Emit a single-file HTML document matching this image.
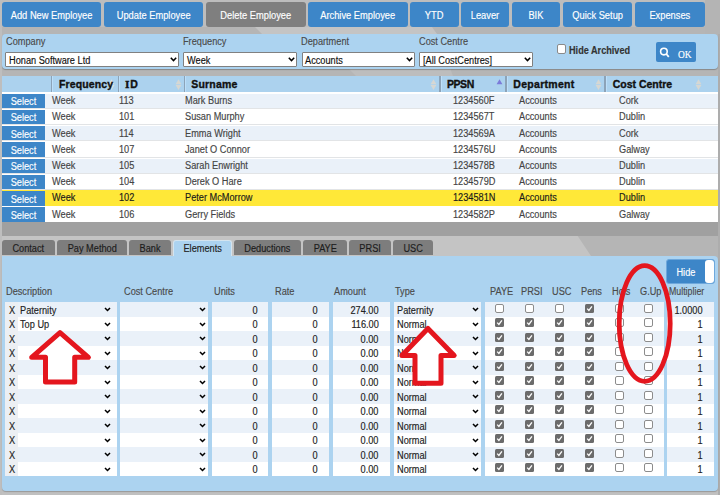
<!DOCTYPE html>
<html><head><meta charset="utf-8"><style>
html,body{margin:0;padding:0;width:720px;height:495px;overflow:hidden;background:#c0c0c0}
body{position:relative;font-family:"Liberation Sans",sans-serif}
.r{position:absolute}
svg{display:block}
.t{position:absolute;line-height:1;white-space:pre;font-family:"Liberation Sans",sans-serif}
</style></head><body>
<svg class="r" style="left:0;top:0" width="720" height="495" viewBox="0 0 720 495"><rect width="720" height="495" fill="#b5b5b5"/><polygon points="255,27 432,27 437,34 262,34" fill="#c4c4c4"/><polygon points="348,68 450,68 453,76 356,76" fill="#bdbdbd"/><polygon points="0,235 577,235 591,256 0,256" fill="#c4c4c4"/><rect x="0" y="0" width="720" height="27" fill="#bdbdbd"/><rect x="0" y="488" width="720" height="7" fill="#c0c0c0"/><rect x="0" y="0" width="2" height="495" fill="#bebebe"/><rect x="705" y="0" width="15" height="34" fill="#b4b4b4"/><rect x="718" y="34" width="2" height="461" fill="#adadad"/></svg>
<div class="r" style="left:2.00px;top:2.30px;width:99.20px;height:24.40px;background:#3d86c8;border-radius:3px"></div>
<div class="t" style="left:2.00px;width:99.20px;top:10.54px;text-align:center;font-size:10px;color:#fff;font-weight:normal;transform:scaleX(0.93);transform-origin:center;-webkit-text-stroke:0.15px #fff;">Add New Employee</div>
<div class="r" style="left:104.00px;top:2.30px;width:99.30px;height:24.40px;background:#3d86c8;border-radius:3px"></div>
<div class="t" style="left:104.00px;width:99.30px;top:10.54px;text-align:center;font-size:10px;color:#fff;font-weight:normal;transform:scaleX(0.93);transform-origin:center;-webkit-text-stroke:0.15px #fff;">Update Employee</div>
<div class="r" style="left:206.00px;top:2.30px;width:99.50px;height:24.40px;background:#7f7f7f;border-radius:3px"></div>
<div class="t" style="left:206.00px;width:99.50px;top:10.54px;text-align:center;font-size:10px;color:#fff;font-weight:normal;transform:scaleX(0.93);transform-origin:center;-webkit-text-stroke:0.15px #fff;">Delete Employee</div>
<div class="r" style="left:308.40px;top:2.30px;width:99.40px;height:24.40px;background:#3d86c8;border-radius:3px"></div>
<div class="t" style="left:308.40px;width:99.40px;top:10.54px;text-align:center;font-size:10px;color:#fff;font-weight:normal;transform:scaleX(0.93);transform-origin:center;-webkit-text-stroke:0.15px #fff;">Archive Employee</div>
<div class="r" style="left:410.40px;top:2.30px;width:48.30px;height:24.40px;background:#3d86c8;border-radius:3px"></div>
<div class="t" style="left:410.40px;width:48.30px;top:10.54px;text-align:center;font-size:10px;color:#fff;font-weight:normal;transform:scaleX(0.93);transform-origin:center;-webkit-text-stroke:0.15px #fff;">YTD</div>
<div class="r" style="left:460.90px;top:2.30px;width:48.00px;height:24.40px;background:#3d86c8;border-radius:3px"></div>
<div class="t" style="left:460.90px;width:48.00px;top:10.54px;text-align:center;font-size:10px;color:#fff;font-weight:normal;transform:scaleX(0.93);transform-origin:center;-webkit-text-stroke:0.15px #fff;">Leaver</div>
<div class="r" style="left:512.20px;top:2.30px;width:47.80px;height:24.40px;background:#3d86c8;border-radius:3px"></div>
<div class="t" style="left:512.20px;width:47.80px;top:10.54px;text-align:center;font-size:10px;color:#fff;font-weight:normal;transform:scaleX(0.93);transform-origin:center;-webkit-text-stroke:0.15px #fff;">BIK</div>
<div class="r" style="left:563.00px;top:2.30px;width:69.30px;height:24.40px;background:#3d86c8;border-radius:3px"></div>
<div class="t" style="left:563.00px;width:69.30px;top:10.54px;text-align:center;font-size:10px;color:#fff;font-weight:normal;transform:scaleX(0.93);transform-origin:center;-webkit-text-stroke:0.15px #fff;">Quick Setup</div>
<div class="r" style="left:635.20px;top:2.30px;width:69.70px;height:24.40px;background:#3d86c8;border-radius:3px"></div>
<div class="t" style="left:635.20px;width:69.70px;top:10.54px;text-align:center;font-size:10px;color:#fff;font-weight:normal;transform:scaleX(0.93);transform-origin:center;-webkit-text-stroke:0.15px #fff;">Expenses</div>
<div class="r" style="left:2.00px;top:34.00px;width:716.00px;height:34.60px;background:#acd3f0;border-radius:4px;box-shadow:0 1px 1px rgba(0,0,0,0.25)"></div>
<div class="t" style="left:5.80px;top:37.34px;font-size:10px;color:#4a4a4a;font-weight:normal;transform:scaleX(0.92);transform-origin:left;-webkit-text-stroke:0.15px #4a4a4a;">Company</div>
<div class="t" style="left:182.80px;top:37.34px;font-size:10px;color:#4a4a4a;font-weight:normal;transform:scaleX(0.92);transform-origin:left;-webkit-text-stroke:0.15px #4a4a4a;">Frequency</div>
<div class="t" style="left:301.00px;top:37.34px;font-size:10px;color:#4a4a4a;font-weight:normal;transform:scaleX(0.92);transform-origin:left;-webkit-text-stroke:0.15px #4a4a4a;">Department</div>
<div class="t" style="left:419.00px;top:37.34px;font-size:10px;color:#4a4a4a;font-weight:normal;transform:scaleX(0.92);transform-origin:left;-webkit-text-stroke:0.15px #4a4a4a;">Cost Centre</div>
<div class="r" style="left:5.30px;top:52.20px;width:174.10px;height:14.60px;background:#fff;border:1px solid #808080;box-sizing:border-box;border-radius:1px"></div>
<div class="t" style="left:8.90px;top:55.73px;font-size:10px;color:#111;font-weight:normal;transform:scaleX(0.92);transform-origin:left;-webkit-text-stroke:0.15px #111;">Honan Software Ltd</div>
<div class="r" style="left:170.40px;top:57.4px;width:7px;height:5px"><svg width="7" height="5" viewBox="0 0 7 5"><path d="M0.8 0.8 L3.5 3.6 L6.2 0.8" fill="none" stroke="#000" stroke-width="1.5"/></svg></div>
<div class="r" style="left:183.30px;top:52.20px;width:113.90px;height:14.60px;background:#fff;border:1px solid #808080;box-sizing:border-box;border-radius:1px"></div>
<div class="t" style="left:186.90px;top:55.73px;font-size:10px;color:#111;font-weight:normal;transform:scaleX(0.92);transform-origin:left;-webkit-text-stroke:0.15px #111;">Week</div>
<div class="r" style="left:288.20px;top:57.4px;width:7px;height:5px"><svg width="7" height="5" viewBox="0 0 7 5"><path d="M0.8 0.8 L3.5 3.6 L6.2 0.8" fill="none" stroke="#000" stroke-width="1.5"/></svg></div>
<div class="r" style="left:301.70px;top:52.20px;width:113.50px;height:14.60px;background:#fff;border:1px solid #808080;box-sizing:border-box;border-radius:1px"></div>
<div class="t" style="left:305.30px;top:55.73px;font-size:10px;color:#111;font-weight:normal;transform:scaleX(0.92);transform-origin:left;-webkit-text-stroke:0.15px #111;">Accounts</div>
<div class="r" style="left:406.20px;top:57.4px;width:7px;height:5px"><svg width="7" height="5" viewBox="0 0 7 5"><path d="M0.8 0.8 L3.5 3.6 L6.2 0.8" fill="none" stroke="#000" stroke-width="1.5"/></svg></div>
<div class="r" style="left:419.40px;top:52.20px;width:113.90px;height:14.60px;background:#fff;border:1px solid #808080;box-sizing:border-box;border-radius:1px"></div>
<div class="t" style="left:423.00px;top:55.73px;font-size:10px;color:#111;font-weight:normal;transform:scaleX(0.92);transform-origin:left;-webkit-text-stroke:0.15px #111;">[All CostCentres]</div>
<div class="r" style="left:524.30px;top:57.4px;width:7px;height:5px"><svg width="7" height="5" viewBox="0 0 7 5"><path d="M0.8 0.8 L3.5 3.6 L6.2 0.8" fill="none" stroke="#000" stroke-width="1.5"/></svg></div>
<div class="r" style="left:557.10px;top:44.00px;width:8.70px;height:9.70px;background:#fff;border:1px solid #8a8a8a;box-sizing:border-box;border-radius:2px"></div>
<div class="t" style="left:568.90px;top:46.34px;font-size:10px;color:#333;font-weight:bold;transform:scaleX(0.914);transform-origin:left;-webkit-text-stroke:0.15px #333;">Hide Archived</div>
<div class="r" style="left:655.90px;top:42.00px;width:39.70px;height:20.00px;background:#3d86c8;border-radius:2px"></div>
<svg class="r" style="left:656px;top:42px" width="40" height="20" viewBox="0 0 40 20"><circle cx="7.9" cy="9.6" r="3.3" fill="none" stroke="#fff" stroke-width="1.6"/><line x1="10.3" y1="12" x2="12.8" y2="14.8" stroke="#fff" stroke-width="1.8"/></svg>
<div class="t" style="left:678.00px;top:49.02px;font-size:11.2px;color:#fff;font-weight:normal;transform:scaleX(0.84);transform-origin:left;-webkit-text-stroke:0.15px #fff;font-family:'Liberation Serif',serif">OK</div>
<div class="r" style="left:2.00px;top:75.60px;width:716.00px;height:146.40px;background:#fff"></div>
<div class="r" style="left:2.00px;top:75.60px;width:716.00px;height:16.20px;background:#acd2ee"></div>
<div class="r" style="left:50.70px;top:75.80px;width:1.50px;height:15.80px;background:#8ca3b8"></div>
<div class="r" style="left:52.20px;top:75.80px;width:1.00px;height:15.80px;background:#bddff9"></div>
<div class="r" style="left:117.50px;top:75.80px;width:1.50px;height:15.80px;background:#8ca3b8"></div>
<div class="r" style="left:119.00px;top:75.80px;width:1.00px;height:15.80px;background:#bddff9"></div>
<div class="r" style="left:183.50px;top:75.80px;width:1.50px;height:15.80px;background:#8ca3b8"></div>
<div class="r" style="left:185.00px;top:75.80px;width:1.00px;height:15.80px;background:#bddff9"></div>
<div class="r" style="left:439.00px;top:75.80px;width:1.50px;height:15.80px;background:#8ca3b8"></div>
<div class="r" style="left:440.50px;top:75.80px;width:1.00px;height:15.80px;background:#bddff9"></div>
<div class="r" style="left:505.30px;top:75.80px;width:1.50px;height:15.80px;background:#8ca3b8"></div>
<div class="r" style="left:506.80px;top:75.80px;width:1.00px;height:15.80px;background:#bddff9"></div>
<div class="r" style="left:604.40px;top:75.80px;width:1.50px;height:15.80px;background:#8ca3b8"></div>
<div class="r" style="left:605.90px;top:75.80px;width:1.00px;height:15.80px;background:#bddff9"></div>
<svg class="r" style="left:108.10px;top:78.8px" width="7" height="11" viewBox="0 0 7 11"><path d="M0.6 5.3 L3.5 0.3 L6.4 5.3Z" fill="#dfe3e0"/><path d="M0.6 5.9 L3.5 10.9 L6.4 5.9Z" fill="#dfe3e0"/></svg>
<svg class="r" style="left:174.50px;top:78.8px" width="7" height="11" viewBox="0 0 7 11"><path d="M0.6 5.3 L3.5 0.3 L6.4 5.3Z" fill="#d6d7d3"/><path d="M0.6 5.9 L3.5 10.9 L6.4 5.9Z" fill="#d6d7d3"/></svg>
<svg class="r" style="left:429.80px;top:78.8px" width="7" height="11" viewBox="0 0 7 11"><path d="M0.6 5.3 L3.5 0.3 L6.4 5.3Z" fill="#d6d7d3"/><path d="M0.6 5.9 L3.5 10.9 L6.4 5.9Z" fill="#d6d7d3"/></svg>
<svg class="r" style="left:594.50px;top:78.8px" width="7" height="11" viewBox="0 0 7 11"><path d="M0.6 5.3 L3.5 0.3 L6.4 5.3Z" fill="#d6d7d3"/><path d="M0.6 5.9 L3.5 10.9 L6.4 5.9Z" fill="#d6d7d3"/></svg>
<svg class="r" style="left:694.50px;top:78.8px" width="7" height="11" viewBox="0 0 7 11"><path d="M0.6 5.3 L3.5 0.3 L6.4 5.3Z" fill="#d6d7d3"/><path d="M0.6 5.9 L3.5 10.9 L6.4 5.9Z" fill="#d6d7d3"/></svg>
<svg class="r" style="left:496.00px;top:78.8px" width="7" height="11" viewBox="0 0 7 11"><path d="M0.6 5.3 L3.5 0.3 L6.4 5.3Z" fill="#7b7bd9"/><path d="M0.6 5.9 L3.5 10.9 L6.4 5.9Z" fill="none"/></svg>
<div class="t" style="left:59.10px;top:79.31px;font-size:10.5px;color:#111;font-weight:bold;transform:scaleX(1);transform-origin:left;-webkit-text-stroke:0.15px #111;letter-spacing:0.1px;-webkit-text-stroke:0.35px #111">Frequency</div>
<div class="t" style="left:125.00px;top:79.31px;font-size:10.5px;color:#111;font-weight:bold;transform:scaleX(1);transform-origin:left;-webkit-text-stroke:0.15px #111;letter-spacing:0.8px;-webkit-text-stroke:0.35px #111"><span style='font-family:Liberation Serif,serif;font-size:11.4px'>I</span>D</div>
<div class="t" style="left:191.30px;top:79.31px;font-size:10.5px;color:#111;font-weight:bold;transform:scaleX(1);transform-origin:left;-webkit-text-stroke:0.15px #111;letter-spacing:0.18px;-webkit-text-stroke:0.35px #111">Surname</div>
<div class="t" style="left:447.00px;top:79.31px;font-size:10.5px;color:#111;font-weight:bold;transform:scaleX(1);transform-origin:left;-webkit-text-stroke:0.15px #111;letter-spacing:-0.45px;-webkit-text-stroke:0.35px #111">PPSN</div>
<div class="t" style="left:513.30px;top:79.31px;font-size:10.5px;color:#111;font-weight:bold;transform:scaleX(1);transform-origin:left;-webkit-text-stroke:0.15px #111;letter-spacing:0.29px;-webkit-text-stroke:0.35px #111">Department</div>
<div class="t" style="left:612.70px;top:79.31px;font-size:10.5px;color:#111;font-weight:bold;transform:scaleX(1);transform-origin:left;-webkit-text-stroke:0.15px #111;letter-spacing:0px;-webkit-text-stroke:0.35px #111">Cost Centre</div>
<div class="r" style="left:45.00px;top:93.50px;width:673.00px;height:14.30px;background:#eaf1f9"></div>
<div class="r" style="left:2.00px;top:107.90px;width:716.00px;height:0.90px;background:#e2e4e6"></div>
<div class="r" style="left:2.00px;top:93.50px;width:43.00px;height:14.30px;background:#3d86c8"></div>
<div class="t" style="left:2.00px;width:43.00px;top:97.03px;text-align:center;font-size:10px;color:#fff;font-weight:normal;transform:scaleX(0.92);transform-origin:center;-webkit-text-stroke:0.15px #fff;">Select</div>
<div class="t" style="left:51.70px;top:96.44px;font-size:10px;color:#444;font-weight:normal;transform:scaleX(0.92);transform-origin:left;-webkit-text-stroke:0.15px #444;">Week</div>
<div class="t" style="left:118.75px;top:96.44px;font-size:10px;color:#444;font-weight:normal;transform:scaleX(0.92);transform-origin:left;-webkit-text-stroke:0.15px #444;">113</div>
<div class="t" style="left:184.70px;top:96.44px;font-size:10px;color:#444;font-weight:normal;transform:scaleX(0.92);transform-origin:left;-webkit-text-stroke:0.15px #444;">Mark Burns</div>
<div class="t" style="left:453.30px;top:96.44px;font-size:10px;color:#444;font-weight:normal;transform:scaleX(0.92);transform-origin:left;-webkit-text-stroke:0.15px #444;">1234560F</div>
<div class="t" style="left:519.20px;top:96.44px;font-size:10px;color:#444;font-weight:normal;transform:scaleX(0.92);transform-origin:left;-webkit-text-stroke:0.15px #444;">Accounts</div>
<div class="t" style="left:618.50px;top:96.44px;font-size:10px;color:#444;font-weight:normal;transform:scaleX(0.92);transform-origin:left;-webkit-text-stroke:0.15px #444;">Cork</div>
<div class="r" style="left:2.00px;top:124.16px;width:716.00px;height:0.90px;background:#e2e4e6"></div>
<div class="r" style="left:2.00px;top:109.76px;width:43.00px;height:14.30px;background:#3d86c8"></div>
<div class="t" style="left:2.00px;width:43.00px;top:113.30px;text-align:center;font-size:10px;color:#fff;font-weight:normal;transform:scaleX(0.92);transform-origin:center;-webkit-text-stroke:0.15px #fff;">Select</div>
<div class="t" style="left:51.70px;top:111.90px;font-size:10px;color:#444;font-weight:normal;transform:scaleX(0.92);transform-origin:left;-webkit-text-stroke:0.15px #444;">Week</div>
<div class="t" style="left:118.75px;top:111.90px;font-size:10px;color:#444;font-weight:normal;transform:scaleX(0.92);transform-origin:left;-webkit-text-stroke:0.15px #444;">101</div>
<div class="t" style="left:184.70px;top:111.90px;font-size:10px;color:#444;font-weight:normal;transform:scaleX(0.92);transform-origin:left;-webkit-text-stroke:0.15px #444;">Susan Murphy</div>
<div class="t" style="left:453.30px;top:111.90px;font-size:10px;color:#444;font-weight:normal;transform:scaleX(0.92);transform-origin:left;-webkit-text-stroke:0.15px #444;">1234567T</div>
<div class="t" style="left:519.20px;top:111.90px;font-size:10px;color:#444;font-weight:normal;transform:scaleX(0.92);transform-origin:left;-webkit-text-stroke:0.15px #444;">Accounts</div>
<div class="t" style="left:618.50px;top:111.90px;font-size:10px;color:#444;font-weight:normal;transform:scaleX(0.92);transform-origin:left;-webkit-text-stroke:0.15px #444;">Dublin</div>
<div class="r" style="left:45.00px;top:126.02px;width:673.00px;height:14.30px;background:#eaf1f9"></div>
<div class="r" style="left:2.00px;top:140.42px;width:716.00px;height:0.90px;background:#e2e4e6"></div>
<div class="r" style="left:2.00px;top:126.02px;width:43.00px;height:14.30px;background:#3d86c8"></div>
<div class="t" style="left:2.00px;width:43.00px;top:129.56px;text-align:center;font-size:10px;color:#fff;font-weight:normal;transform:scaleX(0.92);transform-origin:center;-webkit-text-stroke:0.15px #fff;">Select</div>
<div class="t" style="left:51.70px;top:128.95px;font-size:10px;color:#444;font-weight:normal;transform:scaleX(0.92);transform-origin:left;-webkit-text-stroke:0.15px #444;">Week</div>
<div class="t" style="left:118.75px;top:128.95px;font-size:10px;color:#444;font-weight:normal;transform:scaleX(0.92);transform-origin:left;-webkit-text-stroke:0.15px #444;">114</div>
<div class="t" style="left:184.70px;top:128.95px;font-size:10px;color:#444;font-weight:normal;transform:scaleX(0.92);transform-origin:left;-webkit-text-stroke:0.15px #444;">Emma Wright</div>
<div class="t" style="left:453.30px;top:128.95px;font-size:10px;color:#444;font-weight:normal;transform:scaleX(0.92);transform-origin:left;-webkit-text-stroke:0.15px #444;">1234569A</div>
<div class="t" style="left:519.20px;top:128.95px;font-size:10px;color:#444;font-weight:normal;transform:scaleX(0.92);transform-origin:left;-webkit-text-stroke:0.15px #444;">Accounts</div>
<div class="t" style="left:618.50px;top:128.95px;font-size:10px;color:#444;font-weight:normal;transform:scaleX(0.92);transform-origin:left;-webkit-text-stroke:0.15px #444;">Cork</div>
<div class="r" style="left:2.00px;top:156.68px;width:716.00px;height:0.90px;background:#e2e4e6"></div>
<div class="r" style="left:2.00px;top:142.28px;width:43.00px;height:14.30px;background:#3d86c8"></div>
<div class="t" style="left:2.00px;width:43.00px;top:145.81px;text-align:center;font-size:10px;color:#fff;font-weight:normal;transform:scaleX(0.92);transform-origin:center;-webkit-text-stroke:0.15px #fff;">Select</div>
<div class="t" style="left:51.70px;top:145.21px;font-size:10px;color:#444;font-weight:normal;transform:scaleX(0.92);transform-origin:left;-webkit-text-stroke:0.15px #444;">Week</div>
<div class="t" style="left:118.75px;top:145.21px;font-size:10px;color:#444;font-weight:normal;transform:scaleX(0.92);transform-origin:left;-webkit-text-stroke:0.15px #444;">107</div>
<div class="t" style="left:184.70px;top:145.21px;font-size:10px;color:#444;font-weight:normal;transform:scaleX(0.92);transform-origin:left;-webkit-text-stroke:0.15px #444;">Janet O Connor</div>
<div class="t" style="left:453.30px;top:145.21px;font-size:10px;color:#444;font-weight:normal;transform:scaleX(0.92);transform-origin:left;-webkit-text-stroke:0.15px #444;">1234576U</div>
<div class="t" style="left:519.20px;top:145.21px;font-size:10px;color:#444;font-weight:normal;transform:scaleX(0.92);transform-origin:left;-webkit-text-stroke:0.15px #444;">Accounts</div>
<div class="t" style="left:618.50px;top:145.21px;font-size:10px;color:#444;font-weight:normal;transform:scaleX(0.92);transform-origin:left;-webkit-text-stroke:0.15px #444;">Galway</div>
<div class="r" style="left:45.00px;top:158.54px;width:673.00px;height:14.30px;background:#eaf1f9"></div>
<div class="r" style="left:2.00px;top:172.94px;width:716.00px;height:0.90px;background:#e2e4e6"></div>
<div class="r" style="left:2.00px;top:158.54px;width:43.00px;height:14.30px;background:#3d86c8"></div>
<div class="t" style="left:2.00px;width:43.00px;top:162.08px;text-align:center;font-size:10px;color:#fff;font-weight:normal;transform:scaleX(0.92);transform-origin:center;-webkit-text-stroke:0.15px #fff;">Select</div>
<div class="t" style="left:51.70px;top:161.47px;font-size:10px;color:#444;font-weight:normal;transform:scaleX(0.92);transform-origin:left;-webkit-text-stroke:0.15px #444;">Week</div>
<div class="t" style="left:118.75px;top:161.47px;font-size:10px;color:#444;font-weight:normal;transform:scaleX(0.92);transform-origin:left;-webkit-text-stroke:0.15px #444;">105</div>
<div class="t" style="left:184.70px;top:161.47px;font-size:10px;color:#444;font-weight:normal;transform:scaleX(0.92);transform-origin:left;-webkit-text-stroke:0.15px #444;">Sarah Enwright</div>
<div class="t" style="left:453.30px;top:161.47px;font-size:10px;color:#444;font-weight:normal;transform:scaleX(0.92);transform-origin:left;-webkit-text-stroke:0.15px #444;">1234578B</div>
<div class="t" style="left:519.20px;top:161.47px;font-size:10px;color:#444;font-weight:normal;transform:scaleX(0.92);transform-origin:left;-webkit-text-stroke:0.15px #444;">Accounts</div>
<div class="t" style="left:618.50px;top:161.47px;font-size:10px;color:#444;font-weight:normal;transform:scaleX(0.92);transform-origin:left;-webkit-text-stroke:0.15px #444;">Dublin</div>
<div class="r" style="left:2.00px;top:189.20px;width:716.00px;height:0.90px;background:#e2e4e6"></div>
<div class="r" style="left:2.00px;top:174.80px;width:43.00px;height:14.30px;background:#3d86c8"></div>
<div class="t" style="left:2.00px;width:43.00px;top:178.34px;text-align:center;font-size:10px;color:#fff;font-weight:normal;transform:scaleX(0.92);transform-origin:center;-webkit-text-stroke:0.15px #fff;">Select</div>
<div class="t" style="left:51.70px;top:176.93px;font-size:10px;color:#444;font-weight:normal;transform:scaleX(0.92);transform-origin:left;-webkit-text-stroke:0.15px #444;">Week</div>
<div class="t" style="left:118.75px;top:176.93px;font-size:10px;color:#444;font-weight:normal;transform:scaleX(0.92);transform-origin:left;-webkit-text-stroke:0.15px #444;">104</div>
<div class="t" style="left:184.70px;top:176.93px;font-size:10px;color:#444;font-weight:normal;transform:scaleX(0.92);transform-origin:left;-webkit-text-stroke:0.15px #444;">Derek O Hare</div>
<div class="t" style="left:453.30px;top:176.93px;font-size:10px;color:#444;font-weight:normal;transform:scaleX(0.92);transform-origin:left;-webkit-text-stroke:0.15px #444;">1234579D</div>
<div class="t" style="left:519.20px;top:176.93px;font-size:10px;color:#444;font-weight:normal;transform:scaleX(0.92);transform-origin:left;-webkit-text-stroke:0.15px #444;">Accounts</div>
<div class="t" style="left:618.50px;top:176.93px;font-size:10px;color:#444;font-weight:normal;transform:scaleX(0.92);transform-origin:left;-webkit-text-stroke:0.15px #444;">Dublin</div>
<div class="r" style="left:45.00px;top:190.00px;width:673.00px;height:15.70px;background:#ffe838"></div>
<div class="r" style="left:2.00px;top:190.00px;width:43.00px;height:1.40px;background:#ffe838"></div>
<div class="r" style="left:2.00px;top:191.40px;width:43.00px;height:14.20px;background:#3d86c8"></div>
<div class="t" style="left:2.00px;width:43.00px;top:194.59px;text-align:center;font-size:10px;color:#fff;font-weight:normal;transform:scaleX(0.92);transform-origin:center;-webkit-text-stroke:0.15px #fff;">Select</div>
<div class="t" style="left:51.70px;top:193.19px;font-size:10px;color:#1a1a1a;font-weight:normal;transform:scaleX(0.92);transform-origin:left;-webkit-text-stroke:0.15px #1a1a1a;">Week</div>
<div class="t" style="left:118.75px;top:193.19px;font-size:10px;color:#1a1a1a;font-weight:normal;transform:scaleX(0.92);transform-origin:left;-webkit-text-stroke:0.15px #1a1a1a;">102</div>
<div class="t" style="left:184.70px;top:193.19px;font-size:10px;color:#1a1a1a;font-weight:normal;transform:scaleX(0.92);transform-origin:left;-webkit-text-stroke:0.15px #1a1a1a;">Peter McMorrow</div>
<div class="t" style="left:453.30px;top:193.19px;font-size:10px;color:#1a1a1a;font-weight:normal;transform:scaleX(0.92);transform-origin:left;-webkit-text-stroke:0.15px #1a1a1a;">1234581N</div>
<div class="t" style="left:519.20px;top:193.19px;font-size:10px;color:#1a1a1a;font-weight:normal;transform:scaleX(0.92);transform-origin:left;-webkit-text-stroke:0.15px #1a1a1a;">Accounts</div>
<div class="t" style="left:618.50px;top:193.19px;font-size:10px;color:#1a1a1a;font-weight:normal;transform:scaleX(0.92);transform-origin:left;-webkit-text-stroke:0.15px #1a1a1a;">Dublin</div>
<div class="r" style="left:2.00px;top:207.32px;width:43.00px;height:14.30px;background:#3d86c8"></div>
<div class="t" style="left:2.00px;width:43.00px;top:210.85px;text-align:center;font-size:10px;color:#fff;font-weight:normal;transform:scaleX(0.92);transform-origin:center;-webkit-text-stroke:0.15px #fff;">Select</div>
<div class="t" style="left:51.70px;top:210.25px;font-size:10px;color:#444;font-weight:normal;transform:scaleX(0.92);transform-origin:left;-webkit-text-stroke:0.15px #444;">Week</div>
<div class="t" style="left:118.75px;top:210.25px;font-size:10px;color:#444;font-weight:normal;transform:scaleX(0.92);transform-origin:left;-webkit-text-stroke:0.15px #444;">106</div>
<div class="t" style="left:184.70px;top:210.25px;font-size:10px;color:#444;font-weight:normal;transform:scaleX(0.92);transform-origin:left;-webkit-text-stroke:0.15px #444;">Gerry Fields</div>
<div class="t" style="left:453.30px;top:210.25px;font-size:10px;color:#444;font-weight:normal;transform:scaleX(0.92);transform-origin:left;-webkit-text-stroke:0.15px #444;">1234582P</div>
<div class="t" style="left:519.20px;top:210.25px;font-size:10px;color:#444;font-weight:normal;transform:scaleX(0.92);transform-origin:left;-webkit-text-stroke:0.15px #444;">Accounts</div>
<div class="t" style="left:618.50px;top:210.25px;font-size:10px;color:#444;font-weight:normal;transform:scaleX(0.92);transform-origin:left;-webkit-text-stroke:0.15px #444;">Galway</div>
<div class="r" style="left:2.00px;top:222.00px;width:716.00px;height:13.80px;background:#a0a0a0"></div>
<div class="r" style="left:2.00px;top:239.90px;width:52.60px;height:15.60px;background:#7d7d7d;border-radius:3px 3px 0 0"></div>
<div class="t" style="left:2.00px;width:52.60px;top:243.93px;text-align:center;font-size:10px;color:#1c1c1c;font-weight:normal;transform:scaleX(0.92);transform-origin:center;-webkit-text-stroke:0.15px #1c1c1c;">Contact</div>
<div class="r" style="left:56.50px;top:239.90px;width:70.50px;height:15.60px;background:#7d7d7d;border-radius:3px 3px 0 0"></div>
<div class="t" style="left:56.50px;width:70.50px;top:243.93px;text-align:center;font-size:10px;color:#1c1c1c;font-weight:normal;transform:scaleX(0.92);transform-origin:center;-webkit-text-stroke:0.15px #1c1c1c;">Pay Method</div>
<div class="r" style="left:129.00px;top:239.90px;width:42.10px;height:15.60px;background:#7d7d7d;border-radius:3px 3px 0 0"></div>
<div class="t" style="left:129.00px;width:42.10px;top:243.93px;text-align:center;font-size:10px;color:#1c1c1c;font-weight:normal;transform:scaleX(0.92);transform-origin:center;-webkit-text-stroke:0.15px #1c1c1c;">Bank</div>
<div class="r" style="left:172.90px;top:239.90px;width:59.30px;height:17.10px;background:#acd3f0;border-radius:3px 3px 0 0;border:1px solid #d4e4ef;border-bottom:none;box-sizing:border-box"></div>
<div class="t" style="left:172.90px;width:59.30px;top:243.93px;text-align:center;font-size:10px;color:#222;font-weight:normal;transform:scaleX(0.92);transform-origin:center;-webkit-text-stroke:0.15px #222;">Elements</div>
<div class="r" style="left:234.00px;top:239.90px;width:66.70px;height:15.60px;background:#7d7d7d;border-radius:3px 3px 0 0"></div>
<div class="t" style="left:234.00px;width:66.70px;top:243.93px;text-align:center;font-size:10px;color:#1c1c1c;font-weight:normal;transform:scaleX(0.92);transform-origin:center;-webkit-text-stroke:0.15px #1c1c1c;">Deductions</div>
<div class="r" style="left:302.70px;top:239.90px;width:44.60px;height:15.60px;background:#7d7d7d;border-radius:3px 3px 0 0"></div>
<div class="t" style="left:302.70px;width:44.60px;top:243.93px;text-align:center;font-size:10px;color:#1c1c1c;font-weight:normal;transform:scaleX(0.92);transform-origin:center;-webkit-text-stroke:0.15px #1c1c1c;">PAYE</div>
<div class="r" style="left:348.90px;top:239.90px;width:42.20px;height:15.60px;background:#7d7d7d;border-radius:3px 3px 0 0"></div>
<div class="t" style="left:348.90px;width:42.20px;top:243.93px;text-align:center;font-size:10px;color:#1c1c1c;font-weight:normal;transform:scaleX(0.92);transform-origin:center;-webkit-text-stroke:0.15px #1c1c1c;">PRSI</div>
<div class="r" style="left:392.70px;top:239.90px;width:40.20px;height:15.60px;background:#7d7d7d;border-radius:3px 3px 0 0"></div>
<div class="t" style="left:392.70px;width:40.20px;top:243.93px;text-align:center;font-size:10px;color:#1c1c1c;font-weight:normal;transform:scaleX(0.92);transform-origin:center;-webkit-text-stroke:0.15px #1c1c1c;">USC</div>
<div class="r" style="left:2.00px;top:255.50px;width:716.00px;height:235.00px;background:#acd3f0;border-radius:0 4px 4px 4px;box-shadow:0 1px 1px rgba(0,0,0,0.2)"></div>
<div class="r" style="left:665.70px;top:259.20px;width:49.30px;height:25.00px;background:#3d86c8;border-radius:3px;border:1px solid #6ea8dc;box-sizing:border-box"></div>
<div class="r" style="left:705.40px;top:260.20px;width:8.80px;height:23.00px;background:#fff;border-radius:3px"></div>
<div class="t" style="left:665.70px;width:39.90px;top:268.04px;text-align:center;font-size:10px;color:#fff;font-weight:normal;transform:scaleX(0.92);transform-origin:center;-webkit-text-stroke:0.15px #fff;">Hide</div>
<div class="t" style="left:5.80px;top:287.24px;font-size:10px;color:#4a4a4a;font-weight:normal;transform:scaleX(0.92);transform-origin:left;-webkit-text-stroke:0.15px #4a4a4a;">Description</div>
<div class="t" style="left:123.50px;top:287.24px;font-size:10px;color:#4a4a4a;font-weight:normal;transform:scaleX(0.92);transform-origin:left;-webkit-text-stroke:0.15px #4a4a4a;">Cost Centre</div>
<div class="t" style="left:214.00px;top:287.24px;font-size:10px;color:#4a4a4a;font-weight:normal;transform:scaleX(0.92);transform-origin:left;-webkit-text-stroke:0.15px #4a4a4a;">Units</div>
<div class="t" style="left:274.50px;top:287.24px;font-size:10px;color:#4a4a4a;font-weight:normal;transform:scaleX(0.92);transform-origin:left;-webkit-text-stroke:0.15px #4a4a4a;">Rate</div>
<div class="t" style="left:334.20px;top:287.24px;font-size:10px;color:#4a4a4a;font-weight:normal;transform:scaleX(0.92);transform-origin:left;-webkit-text-stroke:0.15px #4a4a4a;">Amount</div>
<div class="t" style="left:395.00px;top:287.24px;font-size:10px;color:#4a4a4a;font-weight:normal;transform:scaleX(0.92);transform-origin:left;-webkit-text-stroke:0.15px #4a4a4a;">Type</div>
<div class="t" style="left:490.00px;top:287.24px;font-size:10px;color:#4a4a4a;font-weight:normal;transform:scaleX(0.92);transform-origin:left;-webkit-text-stroke:0.15px #4a4a4a;">PAYE</div>
<div class="t" style="left:520.80px;top:287.24px;font-size:10px;color:#4a4a4a;font-weight:normal;transform:scaleX(0.92);transform-origin:left;-webkit-text-stroke:0.15px #4a4a4a;">PRSI</div>
<div class="t" style="left:551.70px;top:287.24px;font-size:10px;color:#4a4a4a;font-weight:normal;transform:scaleX(0.92);transform-origin:left;-webkit-text-stroke:0.15px #4a4a4a;">USC</div>
<div class="t" style="left:580.50px;top:287.24px;font-size:10px;color:#4a4a4a;font-weight:normal;transform:scaleX(0.92);transform-origin:left;-webkit-text-stroke:0.15px #4a4a4a;">Pens</div>
<div class="t" style="left:611.70px;top:287.24px;font-size:10px;color:#4a4a4a;font-weight:normal;transform:scaleX(0.92);transform-origin:left;-webkit-text-stroke:0.15px #4a4a4a;">Hols</div>
<div class="t" style="left:640.00px;top:287.24px;font-size:10px;color:#4a4a4a;font-weight:normal;transform:scaleX(0.92);transform-origin:left;-webkit-text-stroke:0.15px #4a4a4a;">G.Up</div>
<div class="t" style="left:668.80px;top:287.24px;font-size:10px;color:#4a4a4a;font-weight:normal;transform:scaleX(0.88);transform-origin:left;-webkit-text-stroke:0.15px #4a4a4a;">Multiplier</div>
<div class="r" style="left:5.20px;top:302.20px;width:13.10px;height:174.00px;background:#eceff3"></div>
<div class="r" style="left:18.30px;top:302.20px;width:98.30px;height:14.50px;background:#eaf1f9"></div>
<div class="r" style="left:120.10px;top:302.20px;width:87.60px;height:14.50px;background:#eaf1f9"></div>
<div class="r" style="left:211.60px;top:302.20px;width:56.50px;height:14.50px;background:#eaf1f9"></div>
<div class="r" style="left:272.10px;top:302.20px;width:57.00px;height:14.50px;background:#eaf1f9"></div>
<div class="r" style="left:333.10px;top:302.20px;width:56.80px;height:14.50px;background:#eaf1f9"></div>
<div class="r" style="left:393.90px;top:302.20px;width:87.00px;height:14.50px;background:#eaf1f9"></div>
<div class="r" style="left:485.10px;top:302.20px;width:178.60px;height:14.50px;background:#eaf1f9"></div>
<div class="r" style="left:666.70px;top:302.20px;width:47.80px;height:14.50px;background:#eaf1f9"></div>
<div class="t" style="left:8.80px;top:305.94px;font-size:10px;color:#222;font-weight:normal;transform:scaleX(0.92);transform-origin:left;-webkit-text-stroke:0.15px #222;">X</div>
<div class="t" style="left:20.00px;top:305.94px;font-size:10px;color:#222;font-weight:normal;transform:scaleX(0.92);transform-origin:left;-webkit-text-stroke:0.15px #222;">Paternity</div>
<div class="r" style="left:104.2px;top:307.40px;width:7px;height:5px"><svg width="7" height="5" viewBox="0 0 7 5"><path d="M1.0 0.9 L3.5 3.5 L6.0 0.9" fill="none" stroke="#000" stroke-width="1.5"/></svg></div>
<div class="r" style="left:198.8px;top:307.40px;width:7px;height:5px"><svg width="7" height="5" viewBox="0 0 7 5"><path d="M1.0 0.9 L3.5 3.5 L6.0 0.9" fill="none" stroke="#000" stroke-width="1.5"/></svg></div>
<div class="r" style="left:472.3px;top:307.40px;width:7px;height:5px"><svg width="7" height="5" viewBox="0 0 7 5"><path d="M1.0 0.9 L3.5 3.5 L6.0 0.9" fill="none" stroke="#000" stroke-width="1.5"/></svg></div>
<div class="t" style="right:462.00px;top:305.94px;text-align:right;font-size:10px;color:#222;font-weight:normal;transform:scaleX(0.92);transform-origin:right;-webkit-text-stroke:0.15px #222;">0</div>
<div class="t" style="right:402.00px;top:305.94px;text-align:right;font-size:10px;color:#222;font-weight:normal;transform:scaleX(0.92);transform-origin:right;-webkit-text-stroke:0.15px #222;">0</div>
<div class="t" style="right:341.30px;top:305.94px;text-align:right;font-size:10px;color:#222;font-weight:normal;transform:scaleX(0.92);transform-origin:right;-webkit-text-stroke:0.15px #222;">274.00</div>
<div class="t" style="left:396.60px;top:305.94px;font-size:10px;color:#222;font-weight:normal;transform:scaleX(0.92);transform-origin:left;-webkit-text-stroke:0.15px #222;">Paternity</div>
<div class="t" style="right:17.30px;top:305.94px;text-align:right;font-size:10px;color:#222;font-weight:normal;transform:scaleX(0.92);transform-origin:right;-webkit-text-stroke:0.15px #222;">1.0000</div>
<svg class="r" style="left:495.20px;top:303.80px" width="9" height="9" viewBox="0 0 9 9"><rect x="0.5" y="0.5" width="8" height="8" rx="1.5" fill="#fff" stroke="#8c8c8c" stroke-width="1"/></svg>
<svg class="r" style="left:524.90px;top:303.80px" width="9" height="9" viewBox="0 0 9 9"><rect x="0.5" y="0.5" width="8" height="8" rx="1.5" fill="#fff" stroke="#8c8c8c" stroke-width="1"/></svg>
<svg class="r" style="left:554.90px;top:303.80px" width="9" height="9" viewBox="0 0 9 9"><rect x="0.5" y="0.5" width="8" height="8" rx="1.5" fill="#fff" stroke="#8c8c8c" stroke-width="1"/></svg>
<svg class="r" style="left:584.70px;top:303.80px" width="9" height="9" viewBox="0 0 9 9"><rect x="0" y="0" width="9" height="9" rx="1.5" fill="#6b6b6b"/><path d="M2.2 4.6 L3.9 6.5 L6.9 2.4" fill="none" stroke="#fff" stroke-width="1.3"/></svg>
<svg class="r" style="left:614.50px;top:303.80px" width="9" height="9" viewBox="0 0 9 9"><rect x="0.5" y="0.5" width="8" height="8" rx="1.5" fill="#fff" stroke="#8c8c8c" stroke-width="1"/></svg>
<svg class="r" style="left:644.00px;top:303.80px" width="9" height="9" viewBox="0 0 9 9"><rect x="0.5" y="0.5" width="8" height="8" rx="1.5" fill="#fff" stroke="#8c8c8c" stroke-width="1"/></svg>
<div class="r" style="left:18.30px;top:316.70px;width:98.30px;height:14.50px;background:#fff"></div>
<div class="r" style="left:120.10px;top:316.70px;width:87.60px;height:14.50px;background:#fff"></div>
<div class="r" style="left:211.60px;top:316.70px;width:56.50px;height:14.50px;background:#fff"></div>
<div class="r" style="left:272.10px;top:316.70px;width:57.00px;height:14.50px;background:#fff"></div>
<div class="r" style="left:333.10px;top:316.70px;width:56.80px;height:14.50px;background:#fff"></div>
<div class="r" style="left:393.90px;top:316.70px;width:87.00px;height:14.50px;background:#fff"></div>
<div class="r" style="left:485.10px;top:316.70px;width:178.60px;height:14.50px;background:#fff"></div>
<div class="r" style="left:666.70px;top:316.70px;width:47.80px;height:14.50px;background:#fff"></div>
<div class="t" style="left:8.80px;top:320.44px;font-size:10px;color:#222;font-weight:normal;transform:scaleX(0.92);transform-origin:left;-webkit-text-stroke:0.15px #222;">X</div>
<div class="t" style="left:20.00px;top:320.44px;font-size:10px;color:#222;font-weight:normal;transform:scaleX(0.92);transform-origin:left;-webkit-text-stroke:0.15px #222;">Top Up</div>
<div class="r" style="left:104.2px;top:321.90px;width:7px;height:5px"><svg width="7" height="5" viewBox="0 0 7 5"><path d="M1.0 0.9 L3.5 3.5 L6.0 0.9" fill="none" stroke="#000" stroke-width="1.5"/></svg></div>
<div class="r" style="left:198.8px;top:321.90px;width:7px;height:5px"><svg width="7" height="5" viewBox="0 0 7 5"><path d="M1.0 0.9 L3.5 3.5 L6.0 0.9" fill="none" stroke="#000" stroke-width="1.5"/></svg></div>
<div class="r" style="left:472.3px;top:321.90px;width:7px;height:5px"><svg width="7" height="5" viewBox="0 0 7 5"><path d="M1.0 0.9 L3.5 3.5 L6.0 0.9" fill="none" stroke="#000" stroke-width="1.5"/></svg></div>
<div class="t" style="right:462.00px;top:320.44px;text-align:right;font-size:10px;color:#222;font-weight:normal;transform:scaleX(0.92);transform-origin:right;-webkit-text-stroke:0.15px #222;">0</div>
<div class="t" style="right:402.00px;top:320.44px;text-align:right;font-size:10px;color:#222;font-weight:normal;transform:scaleX(0.92);transform-origin:right;-webkit-text-stroke:0.15px #222;">0</div>
<div class="t" style="right:341.30px;top:320.44px;text-align:right;font-size:10px;color:#222;font-weight:normal;transform:scaleX(0.92);transform-origin:right;-webkit-text-stroke:0.15px #222;">116.00</div>
<div class="t" style="left:396.60px;top:320.44px;font-size:10px;color:#222;font-weight:normal;transform:scaleX(0.92);transform-origin:left;-webkit-text-stroke:0.15px #222;">Normal</div>
<div class="t" style="right:17.30px;top:320.44px;text-align:right;font-size:10px;color:#222;font-weight:normal;transform:scaleX(0.92);transform-origin:right;-webkit-text-stroke:0.15px #222;">1</div>
<svg class="r" style="left:495.20px;top:318.30px" width="9" height="9" viewBox="0 0 9 9"><rect x="0" y="0" width="9" height="9" rx="1.5" fill="#6b6b6b"/><path d="M2.2 4.6 L3.9 6.5 L6.9 2.4" fill="none" stroke="#fff" stroke-width="1.3"/></svg>
<svg class="r" style="left:524.90px;top:318.30px" width="9" height="9" viewBox="0 0 9 9"><rect x="0" y="0" width="9" height="9" rx="1.5" fill="#6b6b6b"/><path d="M2.2 4.6 L3.9 6.5 L6.9 2.4" fill="none" stroke="#fff" stroke-width="1.3"/></svg>
<svg class="r" style="left:554.90px;top:318.30px" width="9" height="9" viewBox="0 0 9 9"><rect x="0" y="0" width="9" height="9" rx="1.5" fill="#6b6b6b"/><path d="M2.2 4.6 L3.9 6.5 L6.9 2.4" fill="none" stroke="#fff" stroke-width="1.3"/></svg>
<svg class="r" style="left:584.70px;top:318.30px" width="9" height="9" viewBox="0 0 9 9"><rect x="0" y="0" width="9" height="9" rx="1.5" fill="#6b6b6b"/><path d="M2.2 4.6 L3.9 6.5 L6.9 2.4" fill="none" stroke="#fff" stroke-width="1.3"/></svg>
<svg class="r" style="left:614.50px;top:318.30px" width="9" height="9" viewBox="0 0 9 9"><rect x="0.5" y="0.5" width="8" height="8" rx="1.5" fill="#fff" stroke="#8c8c8c" stroke-width="1"/></svg>
<svg class="r" style="left:644.00px;top:318.30px" width="9" height="9" viewBox="0 0 9 9"><rect x="0.5" y="0.5" width="8" height="8" rx="1.5" fill="#fff" stroke="#8c8c8c" stroke-width="1"/></svg>
<div class="r" style="left:18.30px;top:331.20px;width:98.30px;height:14.50px;background:#eaf1f9"></div>
<div class="r" style="left:120.10px;top:331.20px;width:87.60px;height:14.50px;background:#eaf1f9"></div>
<div class="r" style="left:211.60px;top:331.20px;width:56.50px;height:14.50px;background:#eaf1f9"></div>
<div class="r" style="left:272.10px;top:331.20px;width:57.00px;height:14.50px;background:#eaf1f9"></div>
<div class="r" style="left:333.10px;top:331.20px;width:56.80px;height:14.50px;background:#eaf1f9"></div>
<div class="r" style="left:393.90px;top:331.20px;width:87.00px;height:14.50px;background:#eaf1f9"></div>
<div class="r" style="left:485.10px;top:331.20px;width:178.60px;height:14.50px;background:#eaf1f9"></div>
<div class="r" style="left:666.70px;top:331.20px;width:47.80px;height:14.50px;background:#eaf1f9"></div>
<div class="t" style="left:8.80px;top:334.94px;font-size:10px;color:#222;font-weight:normal;transform:scaleX(0.92);transform-origin:left;-webkit-text-stroke:0.15px #222;">X</div>
<div class="r" style="left:104.2px;top:336.40px;width:7px;height:5px"><svg width="7" height="5" viewBox="0 0 7 5"><path d="M1.0 0.9 L3.5 3.5 L6.0 0.9" fill="none" stroke="#000" stroke-width="1.5"/></svg></div>
<div class="r" style="left:198.8px;top:336.40px;width:7px;height:5px"><svg width="7" height="5" viewBox="0 0 7 5"><path d="M1.0 0.9 L3.5 3.5 L6.0 0.9" fill="none" stroke="#000" stroke-width="1.5"/></svg></div>
<div class="r" style="left:472.3px;top:336.40px;width:7px;height:5px"><svg width="7" height="5" viewBox="0 0 7 5"><path d="M1.0 0.9 L3.5 3.5 L6.0 0.9" fill="none" stroke="#000" stroke-width="1.5"/></svg></div>
<div class="t" style="right:462.00px;top:334.94px;text-align:right;font-size:10px;color:#222;font-weight:normal;transform:scaleX(0.92);transform-origin:right;-webkit-text-stroke:0.15px #222;">0</div>
<div class="t" style="right:402.00px;top:334.94px;text-align:right;font-size:10px;color:#222;font-weight:normal;transform:scaleX(0.92);transform-origin:right;-webkit-text-stroke:0.15px #222;">0</div>
<div class="t" style="right:341.30px;top:334.94px;text-align:right;font-size:10px;color:#222;font-weight:normal;transform:scaleX(0.92);transform-origin:right;-webkit-text-stroke:0.15px #222;">0.00</div>
<div class="t" style="left:396.60px;top:334.94px;font-size:10px;color:#222;font-weight:normal;transform:scaleX(0.92);transform-origin:left;-webkit-text-stroke:0.15px #222;">Normal</div>
<div class="t" style="right:17.30px;top:334.94px;text-align:right;font-size:10px;color:#222;font-weight:normal;transform:scaleX(0.92);transform-origin:right;-webkit-text-stroke:0.15px #222;">1</div>
<svg class="r" style="left:495.20px;top:332.80px" width="9" height="9" viewBox="0 0 9 9"><rect x="0" y="0" width="9" height="9" rx="1.5" fill="#6b6b6b"/><path d="M2.2 4.6 L3.9 6.5 L6.9 2.4" fill="none" stroke="#fff" stroke-width="1.3"/></svg>
<svg class="r" style="left:524.90px;top:332.80px" width="9" height="9" viewBox="0 0 9 9"><rect x="0" y="0" width="9" height="9" rx="1.5" fill="#6b6b6b"/><path d="M2.2 4.6 L3.9 6.5 L6.9 2.4" fill="none" stroke="#fff" stroke-width="1.3"/></svg>
<svg class="r" style="left:554.90px;top:332.80px" width="9" height="9" viewBox="0 0 9 9"><rect x="0" y="0" width="9" height="9" rx="1.5" fill="#6b6b6b"/><path d="M2.2 4.6 L3.9 6.5 L6.9 2.4" fill="none" stroke="#fff" stroke-width="1.3"/></svg>
<svg class="r" style="left:584.70px;top:332.80px" width="9" height="9" viewBox="0 0 9 9"><rect x="0" y="0" width="9" height="9" rx="1.5" fill="#6b6b6b"/><path d="M2.2 4.6 L3.9 6.5 L6.9 2.4" fill="none" stroke="#fff" stroke-width="1.3"/></svg>
<svg class="r" style="left:614.50px;top:332.80px" width="9" height="9" viewBox="0 0 9 9"><rect x="0.5" y="0.5" width="8" height="8" rx="1.5" fill="#fff" stroke="#8c8c8c" stroke-width="1"/></svg>
<svg class="r" style="left:644.00px;top:332.80px" width="9" height="9" viewBox="0 0 9 9"><rect x="0.5" y="0.5" width="8" height="8" rx="1.5" fill="#fff" stroke="#8c8c8c" stroke-width="1"/></svg>
<div class="r" style="left:18.30px;top:345.70px;width:98.30px;height:14.50px;background:#fff"></div>
<div class="r" style="left:120.10px;top:345.70px;width:87.60px;height:14.50px;background:#fff"></div>
<div class="r" style="left:211.60px;top:345.70px;width:56.50px;height:14.50px;background:#fff"></div>
<div class="r" style="left:272.10px;top:345.70px;width:57.00px;height:14.50px;background:#fff"></div>
<div class="r" style="left:333.10px;top:345.70px;width:56.80px;height:14.50px;background:#fff"></div>
<div class="r" style="left:393.90px;top:345.70px;width:87.00px;height:14.50px;background:#fff"></div>
<div class="r" style="left:485.10px;top:345.70px;width:178.60px;height:14.50px;background:#fff"></div>
<div class="r" style="left:666.70px;top:345.70px;width:47.80px;height:14.50px;background:#fff"></div>
<div class="t" style="left:8.80px;top:349.44px;font-size:10px;color:#222;font-weight:normal;transform:scaleX(0.92);transform-origin:left;-webkit-text-stroke:0.15px #222;">X</div>
<div class="r" style="left:104.2px;top:350.90px;width:7px;height:5px"><svg width="7" height="5" viewBox="0 0 7 5"><path d="M1.0 0.9 L3.5 3.5 L6.0 0.9" fill="none" stroke="#000" stroke-width="1.5"/></svg></div>
<div class="r" style="left:198.8px;top:350.90px;width:7px;height:5px"><svg width="7" height="5" viewBox="0 0 7 5"><path d="M1.0 0.9 L3.5 3.5 L6.0 0.9" fill="none" stroke="#000" stroke-width="1.5"/></svg></div>
<div class="r" style="left:472.3px;top:350.90px;width:7px;height:5px"><svg width="7" height="5" viewBox="0 0 7 5"><path d="M1.0 0.9 L3.5 3.5 L6.0 0.9" fill="none" stroke="#000" stroke-width="1.5"/></svg></div>
<div class="t" style="right:462.00px;top:349.44px;text-align:right;font-size:10px;color:#222;font-weight:normal;transform:scaleX(0.92);transform-origin:right;-webkit-text-stroke:0.15px #222;">0</div>
<div class="t" style="right:402.00px;top:349.44px;text-align:right;font-size:10px;color:#222;font-weight:normal;transform:scaleX(0.92);transform-origin:right;-webkit-text-stroke:0.15px #222;">0</div>
<div class="t" style="right:341.30px;top:349.44px;text-align:right;font-size:10px;color:#222;font-weight:normal;transform:scaleX(0.92);transform-origin:right;-webkit-text-stroke:0.15px #222;">0.00</div>
<div class="t" style="left:396.60px;top:349.44px;font-size:10px;color:#222;font-weight:normal;transform:scaleX(0.92);transform-origin:left;-webkit-text-stroke:0.15px #222;">Normal</div>
<div class="t" style="right:17.30px;top:349.44px;text-align:right;font-size:10px;color:#222;font-weight:normal;transform:scaleX(0.92);transform-origin:right;-webkit-text-stroke:0.15px #222;">1</div>
<svg class="r" style="left:495.20px;top:347.30px" width="9" height="9" viewBox="0 0 9 9"><rect x="0" y="0" width="9" height="9" rx="1.5" fill="#6b6b6b"/><path d="M2.2 4.6 L3.9 6.5 L6.9 2.4" fill="none" stroke="#fff" stroke-width="1.3"/></svg>
<svg class="r" style="left:524.90px;top:347.30px" width="9" height="9" viewBox="0 0 9 9"><rect x="0" y="0" width="9" height="9" rx="1.5" fill="#6b6b6b"/><path d="M2.2 4.6 L3.9 6.5 L6.9 2.4" fill="none" stroke="#fff" stroke-width="1.3"/></svg>
<svg class="r" style="left:554.90px;top:347.30px" width="9" height="9" viewBox="0 0 9 9"><rect x="0" y="0" width="9" height="9" rx="1.5" fill="#6b6b6b"/><path d="M2.2 4.6 L3.9 6.5 L6.9 2.4" fill="none" stroke="#fff" stroke-width="1.3"/></svg>
<svg class="r" style="left:584.70px;top:347.30px" width="9" height="9" viewBox="0 0 9 9"><rect x="0" y="0" width="9" height="9" rx="1.5" fill="#6b6b6b"/><path d="M2.2 4.6 L3.9 6.5 L6.9 2.4" fill="none" stroke="#fff" stroke-width="1.3"/></svg>
<svg class="r" style="left:614.50px;top:347.30px" width="9" height="9" viewBox="0 0 9 9"><rect x="0.5" y="0.5" width="8" height="8" rx="1.5" fill="#fff" stroke="#8c8c8c" stroke-width="1"/></svg>
<svg class="r" style="left:644.00px;top:347.30px" width="9" height="9" viewBox="0 0 9 9"><rect x="0.5" y="0.5" width="8" height="8" rx="1.5" fill="#fff" stroke="#8c8c8c" stroke-width="1"/></svg>
<div class="r" style="left:18.30px;top:360.20px;width:98.30px;height:14.50px;background:#eaf1f9"></div>
<div class="r" style="left:120.10px;top:360.20px;width:87.60px;height:14.50px;background:#eaf1f9"></div>
<div class="r" style="left:211.60px;top:360.20px;width:56.50px;height:14.50px;background:#eaf1f9"></div>
<div class="r" style="left:272.10px;top:360.20px;width:57.00px;height:14.50px;background:#eaf1f9"></div>
<div class="r" style="left:333.10px;top:360.20px;width:56.80px;height:14.50px;background:#eaf1f9"></div>
<div class="r" style="left:393.90px;top:360.20px;width:87.00px;height:14.50px;background:#eaf1f9"></div>
<div class="r" style="left:485.10px;top:360.20px;width:178.60px;height:14.50px;background:#eaf1f9"></div>
<div class="r" style="left:666.70px;top:360.20px;width:47.80px;height:14.50px;background:#eaf1f9"></div>
<div class="t" style="left:8.80px;top:363.94px;font-size:10px;color:#222;font-weight:normal;transform:scaleX(0.92);transform-origin:left;-webkit-text-stroke:0.15px #222;">X</div>
<div class="r" style="left:104.2px;top:365.40px;width:7px;height:5px"><svg width="7" height="5" viewBox="0 0 7 5"><path d="M1.0 0.9 L3.5 3.5 L6.0 0.9" fill="none" stroke="#000" stroke-width="1.5"/></svg></div>
<div class="r" style="left:198.8px;top:365.40px;width:7px;height:5px"><svg width="7" height="5" viewBox="0 0 7 5"><path d="M1.0 0.9 L3.5 3.5 L6.0 0.9" fill="none" stroke="#000" stroke-width="1.5"/></svg></div>
<div class="r" style="left:472.3px;top:365.40px;width:7px;height:5px"><svg width="7" height="5" viewBox="0 0 7 5"><path d="M1.0 0.9 L3.5 3.5 L6.0 0.9" fill="none" stroke="#000" stroke-width="1.5"/></svg></div>
<div class="t" style="right:462.00px;top:363.94px;text-align:right;font-size:10px;color:#222;font-weight:normal;transform:scaleX(0.92);transform-origin:right;-webkit-text-stroke:0.15px #222;">0</div>
<div class="t" style="right:402.00px;top:363.94px;text-align:right;font-size:10px;color:#222;font-weight:normal;transform:scaleX(0.92);transform-origin:right;-webkit-text-stroke:0.15px #222;">0</div>
<div class="t" style="right:341.30px;top:363.94px;text-align:right;font-size:10px;color:#222;font-weight:normal;transform:scaleX(0.92);transform-origin:right;-webkit-text-stroke:0.15px #222;">0.00</div>
<div class="t" style="left:396.60px;top:363.94px;font-size:10px;color:#222;font-weight:normal;transform:scaleX(0.92);transform-origin:left;-webkit-text-stroke:0.15px #222;">Normal</div>
<div class="t" style="right:17.30px;top:363.94px;text-align:right;font-size:10px;color:#222;font-weight:normal;transform:scaleX(0.92);transform-origin:right;-webkit-text-stroke:0.15px #222;">1</div>
<svg class="r" style="left:495.20px;top:361.80px" width="9" height="9" viewBox="0 0 9 9"><rect x="0" y="0" width="9" height="9" rx="1.5" fill="#6b6b6b"/><path d="M2.2 4.6 L3.9 6.5 L6.9 2.4" fill="none" stroke="#fff" stroke-width="1.3"/></svg>
<svg class="r" style="left:524.90px;top:361.80px" width="9" height="9" viewBox="0 0 9 9"><rect x="0" y="0" width="9" height="9" rx="1.5" fill="#6b6b6b"/><path d="M2.2 4.6 L3.9 6.5 L6.9 2.4" fill="none" stroke="#fff" stroke-width="1.3"/></svg>
<svg class="r" style="left:554.90px;top:361.80px" width="9" height="9" viewBox="0 0 9 9"><rect x="0" y="0" width="9" height="9" rx="1.5" fill="#6b6b6b"/><path d="M2.2 4.6 L3.9 6.5 L6.9 2.4" fill="none" stroke="#fff" stroke-width="1.3"/></svg>
<svg class="r" style="left:584.70px;top:361.80px" width="9" height="9" viewBox="0 0 9 9"><rect x="0" y="0" width="9" height="9" rx="1.5" fill="#6b6b6b"/><path d="M2.2 4.6 L3.9 6.5 L6.9 2.4" fill="none" stroke="#fff" stroke-width="1.3"/></svg>
<svg class="r" style="left:614.50px;top:361.80px" width="9" height="9" viewBox="0 0 9 9"><rect x="0.5" y="0.5" width="8" height="8" rx="1.5" fill="#fff" stroke="#8c8c8c" stroke-width="1"/></svg>
<svg class="r" style="left:644.00px;top:361.80px" width="9" height="9" viewBox="0 0 9 9"><rect x="0.5" y="0.5" width="8" height="8" rx="1.5" fill="#fff" stroke="#8c8c8c" stroke-width="1"/></svg>
<div class="r" style="left:18.30px;top:374.70px;width:98.30px;height:14.50px;background:#fff"></div>
<div class="r" style="left:120.10px;top:374.70px;width:87.60px;height:14.50px;background:#fff"></div>
<div class="r" style="left:211.60px;top:374.70px;width:56.50px;height:14.50px;background:#fff"></div>
<div class="r" style="left:272.10px;top:374.70px;width:57.00px;height:14.50px;background:#fff"></div>
<div class="r" style="left:333.10px;top:374.70px;width:56.80px;height:14.50px;background:#fff"></div>
<div class="r" style="left:393.90px;top:374.70px;width:87.00px;height:14.50px;background:#fff"></div>
<div class="r" style="left:485.10px;top:374.70px;width:178.60px;height:14.50px;background:#fff"></div>
<div class="r" style="left:666.70px;top:374.70px;width:47.80px;height:14.50px;background:#fff"></div>
<div class="t" style="left:8.80px;top:378.44px;font-size:10px;color:#222;font-weight:normal;transform:scaleX(0.92);transform-origin:left;-webkit-text-stroke:0.15px #222;">X</div>
<div class="r" style="left:104.2px;top:379.90px;width:7px;height:5px"><svg width="7" height="5" viewBox="0 0 7 5"><path d="M1.0 0.9 L3.5 3.5 L6.0 0.9" fill="none" stroke="#000" stroke-width="1.5"/></svg></div>
<div class="r" style="left:198.8px;top:379.90px;width:7px;height:5px"><svg width="7" height="5" viewBox="0 0 7 5"><path d="M1.0 0.9 L3.5 3.5 L6.0 0.9" fill="none" stroke="#000" stroke-width="1.5"/></svg></div>
<div class="r" style="left:472.3px;top:379.90px;width:7px;height:5px"><svg width="7" height="5" viewBox="0 0 7 5"><path d="M1.0 0.9 L3.5 3.5 L6.0 0.9" fill="none" stroke="#000" stroke-width="1.5"/></svg></div>
<div class="t" style="right:462.00px;top:378.44px;text-align:right;font-size:10px;color:#222;font-weight:normal;transform:scaleX(0.92);transform-origin:right;-webkit-text-stroke:0.15px #222;">0</div>
<div class="t" style="right:402.00px;top:378.44px;text-align:right;font-size:10px;color:#222;font-weight:normal;transform:scaleX(0.92);transform-origin:right;-webkit-text-stroke:0.15px #222;">0</div>
<div class="t" style="right:341.30px;top:378.44px;text-align:right;font-size:10px;color:#222;font-weight:normal;transform:scaleX(0.92);transform-origin:right;-webkit-text-stroke:0.15px #222;">0.00</div>
<div class="t" style="left:396.60px;top:378.44px;font-size:10px;color:#222;font-weight:normal;transform:scaleX(0.92);transform-origin:left;-webkit-text-stroke:0.15px #222;">Normal</div>
<div class="t" style="right:17.30px;top:378.44px;text-align:right;font-size:10px;color:#222;font-weight:normal;transform:scaleX(0.92);transform-origin:right;-webkit-text-stroke:0.15px #222;">1</div>
<svg class="r" style="left:495.20px;top:376.30px" width="9" height="9" viewBox="0 0 9 9"><rect x="0" y="0" width="9" height="9" rx="1.5" fill="#6b6b6b"/><path d="M2.2 4.6 L3.9 6.5 L6.9 2.4" fill="none" stroke="#fff" stroke-width="1.3"/></svg>
<svg class="r" style="left:524.90px;top:376.30px" width="9" height="9" viewBox="0 0 9 9"><rect x="0" y="0" width="9" height="9" rx="1.5" fill="#6b6b6b"/><path d="M2.2 4.6 L3.9 6.5 L6.9 2.4" fill="none" stroke="#fff" stroke-width="1.3"/></svg>
<svg class="r" style="left:554.90px;top:376.30px" width="9" height="9" viewBox="0 0 9 9"><rect x="0" y="0" width="9" height="9" rx="1.5" fill="#6b6b6b"/><path d="M2.2 4.6 L3.9 6.5 L6.9 2.4" fill="none" stroke="#fff" stroke-width="1.3"/></svg>
<svg class="r" style="left:584.70px;top:376.30px" width="9" height="9" viewBox="0 0 9 9"><rect x="0" y="0" width="9" height="9" rx="1.5" fill="#6b6b6b"/><path d="M2.2 4.6 L3.9 6.5 L6.9 2.4" fill="none" stroke="#fff" stroke-width="1.3"/></svg>
<svg class="r" style="left:614.50px;top:376.30px" width="9" height="9" viewBox="0 0 9 9"><rect x="0.5" y="0.5" width="8" height="8" rx="1.5" fill="#fff" stroke="#8c8c8c" stroke-width="1"/></svg>
<svg class="r" style="left:644.00px;top:376.30px" width="9" height="9" viewBox="0 0 9 9"><rect x="0.5" y="0.5" width="8" height="8" rx="1.5" fill="#fff" stroke="#8c8c8c" stroke-width="1"/></svg>
<div class="r" style="left:18.30px;top:389.20px;width:98.30px;height:14.50px;background:#eaf1f9"></div>
<div class="r" style="left:120.10px;top:389.20px;width:87.60px;height:14.50px;background:#eaf1f9"></div>
<div class="r" style="left:211.60px;top:389.20px;width:56.50px;height:14.50px;background:#eaf1f9"></div>
<div class="r" style="left:272.10px;top:389.20px;width:57.00px;height:14.50px;background:#eaf1f9"></div>
<div class="r" style="left:333.10px;top:389.20px;width:56.80px;height:14.50px;background:#eaf1f9"></div>
<div class="r" style="left:393.90px;top:389.20px;width:87.00px;height:14.50px;background:#eaf1f9"></div>
<div class="r" style="left:485.10px;top:389.20px;width:178.60px;height:14.50px;background:#eaf1f9"></div>
<div class="r" style="left:666.70px;top:389.20px;width:47.80px;height:14.50px;background:#eaf1f9"></div>
<div class="t" style="left:8.80px;top:392.94px;font-size:10px;color:#222;font-weight:normal;transform:scaleX(0.92);transform-origin:left;-webkit-text-stroke:0.15px #222;">X</div>
<div class="r" style="left:104.2px;top:394.40px;width:7px;height:5px"><svg width="7" height="5" viewBox="0 0 7 5"><path d="M1.0 0.9 L3.5 3.5 L6.0 0.9" fill="none" stroke="#000" stroke-width="1.5"/></svg></div>
<div class="r" style="left:198.8px;top:394.40px;width:7px;height:5px"><svg width="7" height="5" viewBox="0 0 7 5"><path d="M1.0 0.9 L3.5 3.5 L6.0 0.9" fill="none" stroke="#000" stroke-width="1.5"/></svg></div>
<div class="r" style="left:472.3px;top:394.40px;width:7px;height:5px"><svg width="7" height="5" viewBox="0 0 7 5"><path d="M1.0 0.9 L3.5 3.5 L6.0 0.9" fill="none" stroke="#000" stroke-width="1.5"/></svg></div>
<div class="t" style="right:462.00px;top:392.94px;text-align:right;font-size:10px;color:#222;font-weight:normal;transform:scaleX(0.92);transform-origin:right;-webkit-text-stroke:0.15px #222;">0</div>
<div class="t" style="right:402.00px;top:392.94px;text-align:right;font-size:10px;color:#222;font-weight:normal;transform:scaleX(0.92);transform-origin:right;-webkit-text-stroke:0.15px #222;">0</div>
<div class="t" style="right:341.30px;top:392.94px;text-align:right;font-size:10px;color:#222;font-weight:normal;transform:scaleX(0.92);transform-origin:right;-webkit-text-stroke:0.15px #222;">0.00</div>
<div class="t" style="left:396.60px;top:392.94px;font-size:10px;color:#222;font-weight:normal;transform:scaleX(0.92);transform-origin:left;-webkit-text-stroke:0.15px #222;">Normal</div>
<div class="t" style="right:17.30px;top:392.94px;text-align:right;font-size:10px;color:#222;font-weight:normal;transform:scaleX(0.92);transform-origin:right;-webkit-text-stroke:0.15px #222;">1</div>
<svg class="r" style="left:495.20px;top:390.80px" width="9" height="9" viewBox="0 0 9 9"><rect x="0" y="0" width="9" height="9" rx="1.5" fill="#6b6b6b"/><path d="M2.2 4.6 L3.9 6.5 L6.9 2.4" fill="none" stroke="#fff" stroke-width="1.3"/></svg>
<svg class="r" style="left:524.90px;top:390.80px" width="9" height="9" viewBox="0 0 9 9"><rect x="0" y="0" width="9" height="9" rx="1.5" fill="#6b6b6b"/><path d="M2.2 4.6 L3.9 6.5 L6.9 2.4" fill="none" stroke="#fff" stroke-width="1.3"/></svg>
<svg class="r" style="left:554.90px;top:390.80px" width="9" height="9" viewBox="0 0 9 9"><rect x="0" y="0" width="9" height="9" rx="1.5" fill="#6b6b6b"/><path d="M2.2 4.6 L3.9 6.5 L6.9 2.4" fill="none" stroke="#fff" stroke-width="1.3"/></svg>
<svg class="r" style="left:584.70px;top:390.80px" width="9" height="9" viewBox="0 0 9 9"><rect x="0" y="0" width="9" height="9" rx="1.5" fill="#6b6b6b"/><path d="M2.2 4.6 L3.9 6.5 L6.9 2.4" fill="none" stroke="#fff" stroke-width="1.3"/></svg>
<svg class="r" style="left:614.50px;top:390.80px" width="9" height="9" viewBox="0 0 9 9"><rect x="0.5" y="0.5" width="8" height="8" rx="1.5" fill="#fff" stroke="#8c8c8c" stroke-width="1"/></svg>
<svg class="r" style="left:644.00px;top:390.80px" width="9" height="9" viewBox="0 0 9 9"><rect x="0.5" y="0.5" width="8" height="8" rx="1.5" fill="#fff" stroke="#8c8c8c" stroke-width="1"/></svg>
<div class="r" style="left:18.30px;top:403.70px;width:98.30px;height:14.50px;background:#fff"></div>
<div class="r" style="left:120.10px;top:403.70px;width:87.60px;height:14.50px;background:#fff"></div>
<div class="r" style="left:211.60px;top:403.70px;width:56.50px;height:14.50px;background:#fff"></div>
<div class="r" style="left:272.10px;top:403.70px;width:57.00px;height:14.50px;background:#fff"></div>
<div class="r" style="left:333.10px;top:403.70px;width:56.80px;height:14.50px;background:#fff"></div>
<div class="r" style="left:393.90px;top:403.70px;width:87.00px;height:14.50px;background:#fff"></div>
<div class="r" style="left:485.10px;top:403.70px;width:178.60px;height:14.50px;background:#fff"></div>
<div class="r" style="left:666.70px;top:403.70px;width:47.80px;height:14.50px;background:#fff"></div>
<div class="t" style="left:8.80px;top:407.44px;font-size:10px;color:#222;font-weight:normal;transform:scaleX(0.92);transform-origin:left;-webkit-text-stroke:0.15px #222;">X</div>
<div class="r" style="left:104.2px;top:408.90px;width:7px;height:5px"><svg width="7" height="5" viewBox="0 0 7 5"><path d="M1.0 0.9 L3.5 3.5 L6.0 0.9" fill="none" stroke="#000" stroke-width="1.5"/></svg></div>
<div class="r" style="left:198.8px;top:408.90px;width:7px;height:5px"><svg width="7" height="5" viewBox="0 0 7 5"><path d="M1.0 0.9 L3.5 3.5 L6.0 0.9" fill="none" stroke="#000" stroke-width="1.5"/></svg></div>
<div class="r" style="left:472.3px;top:408.90px;width:7px;height:5px"><svg width="7" height="5" viewBox="0 0 7 5"><path d="M1.0 0.9 L3.5 3.5 L6.0 0.9" fill="none" stroke="#000" stroke-width="1.5"/></svg></div>
<div class="t" style="right:462.00px;top:407.44px;text-align:right;font-size:10px;color:#222;font-weight:normal;transform:scaleX(0.92);transform-origin:right;-webkit-text-stroke:0.15px #222;">0</div>
<div class="t" style="right:402.00px;top:407.44px;text-align:right;font-size:10px;color:#222;font-weight:normal;transform:scaleX(0.92);transform-origin:right;-webkit-text-stroke:0.15px #222;">0</div>
<div class="t" style="right:341.30px;top:407.44px;text-align:right;font-size:10px;color:#222;font-weight:normal;transform:scaleX(0.92);transform-origin:right;-webkit-text-stroke:0.15px #222;">0.00</div>
<div class="t" style="left:396.60px;top:407.44px;font-size:10px;color:#222;font-weight:normal;transform:scaleX(0.92);transform-origin:left;-webkit-text-stroke:0.15px #222;">Normal</div>
<div class="t" style="right:17.30px;top:407.44px;text-align:right;font-size:10px;color:#222;font-weight:normal;transform:scaleX(0.92);transform-origin:right;-webkit-text-stroke:0.15px #222;">1</div>
<svg class="r" style="left:495.20px;top:405.30px" width="9" height="9" viewBox="0 0 9 9"><rect x="0" y="0" width="9" height="9" rx="1.5" fill="#6b6b6b"/><path d="M2.2 4.6 L3.9 6.5 L6.9 2.4" fill="none" stroke="#fff" stroke-width="1.3"/></svg>
<svg class="r" style="left:524.90px;top:405.30px" width="9" height="9" viewBox="0 0 9 9"><rect x="0" y="0" width="9" height="9" rx="1.5" fill="#6b6b6b"/><path d="M2.2 4.6 L3.9 6.5 L6.9 2.4" fill="none" stroke="#fff" stroke-width="1.3"/></svg>
<svg class="r" style="left:554.90px;top:405.30px" width="9" height="9" viewBox="0 0 9 9"><rect x="0" y="0" width="9" height="9" rx="1.5" fill="#6b6b6b"/><path d="M2.2 4.6 L3.9 6.5 L6.9 2.4" fill="none" stroke="#fff" stroke-width="1.3"/></svg>
<svg class="r" style="left:584.70px;top:405.30px" width="9" height="9" viewBox="0 0 9 9"><rect x="0" y="0" width="9" height="9" rx="1.5" fill="#6b6b6b"/><path d="M2.2 4.6 L3.9 6.5 L6.9 2.4" fill="none" stroke="#fff" stroke-width="1.3"/></svg>
<svg class="r" style="left:614.50px;top:405.30px" width="9" height="9" viewBox="0 0 9 9"><rect x="0.5" y="0.5" width="8" height="8" rx="1.5" fill="#fff" stroke="#8c8c8c" stroke-width="1"/></svg>
<svg class="r" style="left:644.00px;top:405.30px" width="9" height="9" viewBox="0 0 9 9"><rect x="0.5" y="0.5" width="8" height="8" rx="1.5" fill="#fff" stroke="#8c8c8c" stroke-width="1"/></svg>
<div class="r" style="left:18.30px;top:418.20px;width:98.30px;height:14.50px;background:#eaf1f9"></div>
<div class="r" style="left:120.10px;top:418.20px;width:87.60px;height:14.50px;background:#eaf1f9"></div>
<div class="r" style="left:211.60px;top:418.20px;width:56.50px;height:14.50px;background:#eaf1f9"></div>
<div class="r" style="left:272.10px;top:418.20px;width:57.00px;height:14.50px;background:#eaf1f9"></div>
<div class="r" style="left:333.10px;top:418.20px;width:56.80px;height:14.50px;background:#eaf1f9"></div>
<div class="r" style="left:393.90px;top:418.20px;width:87.00px;height:14.50px;background:#eaf1f9"></div>
<div class="r" style="left:485.10px;top:418.20px;width:178.60px;height:14.50px;background:#eaf1f9"></div>
<div class="r" style="left:666.70px;top:418.20px;width:47.80px;height:14.50px;background:#eaf1f9"></div>
<div class="t" style="left:8.80px;top:421.94px;font-size:10px;color:#222;font-weight:normal;transform:scaleX(0.92);transform-origin:left;-webkit-text-stroke:0.15px #222;">X</div>
<div class="r" style="left:104.2px;top:423.40px;width:7px;height:5px"><svg width="7" height="5" viewBox="0 0 7 5"><path d="M1.0 0.9 L3.5 3.5 L6.0 0.9" fill="none" stroke="#000" stroke-width="1.5"/></svg></div>
<div class="r" style="left:198.8px;top:423.40px;width:7px;height:5px"><svg width="7" height="5" viewBox="0 0 7 5"><path d="M1.0 0.9 L3.5 3.5 L6.0 0.9" fill="none" stroke="#000" stroke-width="1.5"/></svg></div>
<div class="r" style="left:472.3px;top:423.40px;width:7px;height:5px"><svg width="7" height="5" viewBox="0 0 7 5"><path d="M1.0 0.9 L3.5 3.5 L6.0 0.9" fill="none" stroke="#000" stroke-width="1.5"/></svg></div>
<div class="t" style="right:462.00px;top:421.94px;text-align:right;font-size:10px;color:#222;font-weight:normal;transform:scaleX(0.92);transform-origin:right;-webkit-text-stroke:0.15px #222;">0</div>
<div class="t" style="right:402.00px;top:421.94px;text-align:right;font-size:10px;color:#222;font-weight:normal;transform:scaleX(0.92);transform-origin:right;-webkit-text-stroke:0.15px #222;">0</div>
<div class="t" style="right:341.30px;top:421.94px;text-align:right;font-size:10px;color:#222;font-weight:normal;transform:scaleX(0.92);transform-origin:right;-webkit-text-stroke:0.15px #222;">0.00</div>
<div class="t" style="left:396.60px;top:421.94px;font-size:10px;color:#222;font-weight:normal;transform:scaleX(0.92);transform-origin:left;-webkit-text-stroke:0.15px #222;">Normal</div>
<div class="t" style="right:17.30px;top:421.94px;text-align:right;font-size:10px;color:#222;font-weight:normal;transform:scaleX(0.92);transform-origin:right;-webkit-text-stroke:0.15px #222;">1</div>
<svg class="r" style="left:495.20px;top:419.80px" width="9" height="9" viewBox="0 0 9 9"><rect x="0" y="0" width="9" height="9" rx="1.5" fill="#6b6b6b"/><path d="M2.2 4.6 L3.9 6.5 L6.9 2.4" fill="none" stroke="#fff" stroke-width="1.3"/></svg>
<svg class="r" style="left:524.90px;top:419.80px" width="9" height="9" viewBox="0 0 9 9"><rect x="0" y="0" width="9" height="9" rx="1.5" fill="#6b6b6b"/><path d="M2.2 4.6 L3.9 6.5 L6.9 2.4" fill="none" stroke="#fff" stroke-width="1.3"/></svg>
<svg class="r" style="left:554.90px;top:419.80px" width="9" height="9" viewBox="0 0 9 9"><rect x="0" y="0" width="9" height="9" rx="1.5" fill="#6b6b6b"/><path d="M2.2 4.6 L3.9 6.5 L6.9 2.4" fill="none" stroke="#fff" stroke-width="1.3"/></svg>
<svg class="r" style="left:584.70px;top:419.80px" width="9" height="9" viewBox="0 0 9 9"><rect x="0" y="0" width="9" height="9" rx="1.5" fill="#6b6b6b"/><path d="M2.2 4.6 L3.9 6.5 L6.9 2.4" fill="none" stroke="#fff" stroke-width="1.3"/></svg>
<svg class="r" style="left:614.50px;top:419.80px" width="9" height="9" viewBox="0 0 9 9"><rect x="0.5" y="0.5" width="8" height="8" rx="1.5" fill="#fff" stroke="#8c8c8c" stroke-width="1"/></svg>
<svg class="r" style="left:644.00px;top:419.80px" width="9" height="9" viewBox="0 0 9 9"><rect x="0.5" y="0.5" width="8" height="8" rx="1.5" fill="#fff" stroke="#8c8c8c" stroke-width="1"/></svg>
<div class="r" style="left:18.30px;top:432.70px;width:98.30px;height:14.50px;background:#fff"></div>
<div class="r" style="left:120.10px;top:432.70px;width:87.60px;height:14.50px;background:#fff"></div>
<div class="r" style="left:211.60px;top:432.70px;width:56.50px;height:14.50px;background:#fff"></div>
<div class="r" style="left:272.10px;top:432.70px;width:57.00px;height:14.50px;background:#fff"></div>
<div class="r" style="left:333.10px;top:432.70px;width:56.80px;height:14.50px;background:#fff"></div>
<div class="r" style="left:393.90px;top:432.70px;width:87.00px;height:14.50px;background:#fff"></div>
<div class="r" style="left:485.10px;top:432.70px;width:178.60px;height:14.50px;background:#fff"></div>
<div class="r" style="left:666.70px;top:432.70px;width:47.80px;height:14.50px;background:#fff"></div>
<div class="t" style="left:8.80px;top:436.44px;font-size:10px;color:#222;font-weight:normal;transform:scaleX(0.92);transform-origin:left;-webkit-text-stroke:0.15px #222;">X</div>
<div class="r" style="left:104.2px;top:437.90px;width:7px;height:5px"><svg width="7" height="5" viewBox="0 0 7 5"><path d="M1.0 0.9 L3.5 3.5 L6.0 0.9" fill="none" stroke="#000" stroke-width="1.5"/></svg></div>
<div class="r" style="left:198.8px;top:437.90px;width:7px;height:5px"><svg width="7" height="5" viewBox="0 0 7 5"><path d="M1.0 0.9 L3.5 3.5 L6.0 0.9" fill="none" stroke="#000" stroke-width="1.5"/></svg></div>
<div class="r" style="left:472.3px;top:437.90px;width:7px;height:5px"><svg width="7" height="5" viewBox="0 0 7 5"><path d="M1.0 0.9 L3.5 3.5 L6.0 0.9" fill="none" stroke="#000" stroke-width="1.5"/></svg></div>
<div class="t" style="right:462.00px;top:436.44px;text-align:right;font-size:10px;color:#222;font-weight:normal;transform:scaleX(0.92);transform-origin:right;-webkit-text-stroke:0.15px #222;">0</div>
<div class="t" style="right:402.00px;top:436.44px;text-align:right;font-size:10px;color:#222;font-weight:normal;transform:scaleX(0.92);transform-origin:right;-webkit-text-stroke:0.15px #222;">0</div>
<div class="t" style="right:341.30px;top:436.44px;text-align:right;font-size:10px;color:#222;font-weight:normal;transform:scaleX(0.92);transform-origin:right;-webkit-text-stroke:0.15px #222;">0.00</div>
<div class="t" style="left:396.60px;top:436.44px;font-size:10px;color:#222;font-weight:normal;transform:scaleX(0.92);transform-origin:left;-webkit-text-stroke:0.15px #222;">Normal</div>
<div class="t" style="right:17.30px;top:436.44px;text-align:right;font-size:10px;color:#222;font-weight:normal;transform:scaleX(0.92);transform-origin:right;-webkit-text-stroke:0.15px #222;">1</div>
<svg class="r" style="left:495.20px;top:434.30px" width="9" height="9" viewBox="0 0 9 9"><rect x="0" y="0" width="9" height="9" rx="1.5" fill="#6b6b6b"/><path d="M2.2 4.6 L3.9 6.5 L6.9 2.4" fill="none" stroke="#fff" stroke-width="1.3"/></svg>
<svg class="r" style="left:524.90px;top:434.30px" width="9" height="9" viewBox="0 0 9 9"><rect x="0" y="0" width="9" height="9" rx="1.5" fill="#6b6b6b"/><path d="M2.2 4.6 L3.9 6.5 L6.9 2.4" fill="none" stroke="#fff" stroke-width="1.3"/></svg>
<svg class="r" style="left:554.90px;top:434.30px" width="9" height="9" viewBox="0 0 9 9"><rect x="0" y="0" width="9" height="9" rx="1.5" fill="#6b6b6b"/><path d="M2.2 4.6 L3.9 6.5 L6.9 2.4" fill="none" stroke="#fff" stroke-width="1.3"/></svg>
<svg class="r" style="left:584.70px;top:434.30px" width="9" height="9" viewBox="0 0 9 9"><rect x="0" y="0" width="9" height="9" rx="1.5" fill="#6b6b6b"/><path d="M2.2 4.6 L3.9 6.5 L6.9 2.4" fill="none" stroke="#fff" stroke-width="1.3"/></svg>
<svg class="r" style="left:614.50px;top:434.30px" width="9" height="9" viewBox="0 0 9 9"><rect x="0.5" y="0.5" width="8" height="8" rx="1.5" fill="#fff" stroke="#8c8c8c" stroke-width="1"/></svg>
<svg class="r" style="left:644.00px;top:434.30px" width="9" height="9" viewBox="0 0 9 9"><rect x="0.5" y="0.5" width="8" height="8" rx="1.5" fill="#fff" stroke="#8c8c8c" stroke-width="1"/></svg>
<div class="r" style="left:18.30px;top:447.20px;width:98.30px;height:14.50px;background:#eaf1f9"></div>
<div class="r" style="left:120.10px;top:447.20px;width:87.60px;height:14.50px;background:#eaf1f9"></div>
<div class="r" style="left:211.60px;top:447.20px;width:56.50px;height:14.50px;background:#eaf1f9"></div>
<div class="r" style="left:272.10px;top:447.20px;width:57.00px;height:14.50px;background:#eaf1f9"></div>
<div class="r" style="left:333.10px;top:447.20px;width:56.80px;height:14.50px;background:#eaf1f9"></div>
<div class="r" style="left:393.90px;top:447.20px;width:87.00px;height:14.50px;background:#eaf1f9"></div>
<div class="r" style="left:485.10px;top:447.20px;width:178.60px;height:14.50px;background:#eaf1f9"></div>
<div class="r" style="left:666.70px;top:447.20px;width:47.80px;height:14.50px;background:#eaf1f9"></div>
<div class="t" style="left:8.80px;top:450.94px;font-size:10px;color:#222;font-weight:normal;transform:scaleX(0.92);transform-origin:left;-webkit-text-stroke:0.15px #222;">X</div>
<div class="r" style="left:104.2px;top:452.40px;width:7px;height:5px"><svg width="7" height="5" viewBox="0 0 7 5"><path d="M1.0 0.9 L3.5 3.5 L6.0 0.9" fill="none" stroke="#000" stroke-width="1.5"/></svg></div>
<div class="r" style="left:198.8px;top:452.40px;width:7px;height:5px"><svg width="7" height="5" viewBox="0 0 7 5"><path d="M1.0 0.9 L3.5 3.5 L6.0 0.9" fill="none" stroke="#000" stroke-width="1.5"/></svg></div>
<div class="r" style="left:472.3px;top:452.40px;width:7px;height:5px"><svg width="7" height="5" viewBox="0 0 7 5"><path d="M1.0 0.9 L3.5 3.5 L6.0 0.9" fill="none" stroke="#000" stroke-width="1.5"/></svg></div>
<div class="t" style="right:462.00px;top:450.94px;text-align:right;font-size:10px;color:#222;font-weight:normal;transform:scaleX(0.92);transform-origin:right;-webkit-text-stroke:0.15px #222;">0</div>
<div class="t" style="right:402.00px;top:450.94px;text-align:right;font-size:10px;color:#222;font-weight:normal;transform:scaleX(0.92);transform-origin:right;-webkit-text-stroke:0.15px #222;">0</div>
<div class="t" style="right:341.30px;top:450.94px;text-align:right;font-size:10px;color:#222;font-weight:normal;transform:scaleX(0.92);transform-origin:right;-webkit-text-stroke:0.15px #222;">0.00</div>
<div class="t" style="left:396.60px;top:450.94px;font-size:10px;color:#222;font-weight:normal;transform:scaleX(0.92);transform-origin:left;-webkit-text-stroke:0.15px #222;">Normal</div>
<div class="t" style="right:17.30px;top:450.94px;text-align:right;font-size:10px;color:#222;font-weight:normal;transform:scaleX(0.92);transform-origin:right;-webkit-text-stroke:0.15px #222;">1</div>
<svg class="r" style="left:495.20px;top:448.80px" width="9" height="9" viewBox="0 0 9 9"><rect x="0" y="0" width="9" height="9" rx="1.5" fill="#6b6b6b"/><path d="M2.2 4.6 L3.9 6.5 L6.9 2.4" fill="none" stroke="#fff" stroke-width="1.3"/></svg>
<svg class="r" style="left:524.90px;top:448.80px" width="9" height="9" viewBox="0 0 9 9"><rect x="0" y="0" width="9" height="9" rx="1.5" fill="#6b6b6b"/><path d="M2.2 4.6 L3.9 6.5 L6.9 2.4" fill="none" stroke="#fff" stroke-width="1.3"/></svg>
<svg class="r" style="left:554.90px;top:448.80px" width="9" height="9" viewBox="0 0 9 9"><rect x="0" y="0" width="9" height="9" rx="1.5" fill="#6b6b6b"/><path d="M2.2 4.6 L3.9 6.5 L6.9 2.4" fill="none" stroke="#fff" stroke-width="1.3"/></svg>
<svg class="r" style="left:584.70px;top:448.80px" width="9" height="9" viewBox="0 0 9 9"><rect x="0" y="0" width="9" height="9" rx="1.5" fill="#6b6b6b"/><path d="M2.2 4.6 L3.9 6.5 L6.9 2.4" fill="none" stroke="#fff" stroke-width="1.3"/></svg>
<svg class="r" style="left:614.50px;top:448.80px" width="9" height="9" viewBox="0 0 9 9"><rect x="0.5" y="0.5" width="8" height="8" rx="1.5" fill="#fff" stroke="#8c8c8c" stroke-width="1"/></svg>
<svg class="r" style="left:644.00px;top:448.80px" width="9" height="9" viewBox="0 0 9 9"><rect x="0.5" y="0.5" width="8" height="8" rx="1.5" fill="#fff" stroke="#8c8c8c" stroke-width="1"/></svg>
<div class="r" style="left:18.30px;top:461.70px;width:98.30px;height:14.50px;background:#fff"></div>
<div class="r" style="left:120.10px;top:461.70px;width:87.60px;height:14.50px;background:#fff"></div>
<div class="r" style="left:211.60px;top:461.70px;width:56.50px;height:14.50px;background:#fff"></div>
<div class="r" style="left:272.10px;top:461.70px;width:57.00px;height:14.50px;background:#fff"></div>
<div class="r" style="left:333.10px;top:461.70px;width:56.80px;height:14.50px;background:#fff"></div>
<div class="r" style="left:393.90px;top:461.70px;width:87.00px;height:14.50px;background:#fff"></div>
<div class="r" style="left:485.10px;top:461.70px;width:178.60px;height:14.50px;background:#fff"></div>
<div class="r" style="left:666.70px;top:461.70px;width:47.80px;height:14.50px;background:#fff"></div>
<div class="t" style="left:8.80px;top:465.44px;font-size:10px;color:#222;font-weight:normal;transform:scaleX(0.92);transform-origin:left;-webkit-text-stroke:0.15px #222;">X</div>
<div class="r" style="left:104.2px;top:466.90px;width:7px;height:5px"><svg width="7" height="5" viewBox="0 0 7 5"><path d="M1.0 0.9 L3.5 3.5 L6.0 0.9" fill="none" stroke="#000" stroke-width="1.5"/></svg></div>
<div class="r" style="left:198.8px;top:466.90px;width:7px;height:5px"><svg width="7" height="5" viewBox="0 0 7 5"><path d="M1.0 0.9 L3.5 3.5 L6.0 0.9" fill="none" stroke="#000" stroke-width="1.5"/></svg></div>
<div class="r" style="left:472.3px;top:466.90px;width:7px;height:5px"><svg width="7" height="5" viewBox="0 0 7 5"><path d="M1.0 0.9 L3.5 3.5 L6.0 0.9" fill="none" stroke="#000" stroke-width="1.5"/></svg></div>
<div class="t" style="right:462.00px;top:465.44px;text-align:right;font-size:10px;color:#222;font-weight:normal;transform:scaleX(0.92);transform-origin:right;-webkit-text-stroke:0.15px #222;">0</div>
<div class="t" style="right:402.00px;top:465.44px;text-align:right;font-size:10px;color:#222;font-weight:normal;transform:scaleX(0.92);transform-origin:right;-webkit-text-stroke:0.15px #222;">0</div>
<div class="t" style="right:341.30px;top:465.44px;text-align:right;font-size:10px;color:#222;font-weight:normal;transform:scaleX(0.92);transform-origin:right;-webkit-text-stroke:0.15px #222;">0.00</div>
<div class="t" style="left:396.60px;top:465.44px;font-size:10px;color:#222;font-weight:normal;transform:scaleX(0.92);transform-origin:left;-webkit-text-stroke:0.15px #222;">Normal</div>
<div class="t" style="right:17.30px;top:465.44px;text-align:right;font-size:10px;color:#222;font-weight:normal;transform:scaleX(0.92);transform-origin:right;-webkit-text-stroke:0.15px #222;">1</div>
<svg class="r" style="left:495.20px;top:463.30px" width="9" height="9" viewBox="0 0 9 9"><rect x="0" y="0" width="9" height="9" rx="1.5" fill="#6b6b6b"/><path d="M2.2 4.6 L3.9 6.5 L6.9 2.4" fill="none" stroke="#fff" stroke-width="1.3"/></svg>
<svg class="r" style="left:524.90px;top:463.30px" width="9" height="9" viewBox="0 0 9 9"><rect x="0" y="0" width="9" height="9" rx="1.5" fill="#6b6b6b"/><path d="M2.2 4.6 L3.9 6.5 L6.9 2.4" fill="none" stroke="#fff" stroke-width="1.3"/></svg>
<svg class="r" style="left:554.90px;top:463.30px" width="9" height="9" viewBox="0 0 9 9"><rect x="0" y="0" width="9" height="9" rx="1.5" fill="#6b6b6b"/><path d="M2.2 4.6 L3.9 6.5 L6.9 2.4" fill="none" stroke="#fff" stroke-width="1.3"/></svg>
<svg class="r" style="left:584.70px;top:463.30px" width="9" height="9" viewBox="0 0 9 9"><rect x="0" y="0" width="9" height="9" rx="1.5" fill="#6b6b6b"/><path d="M2.2 4.6 L3.9 6.5 L6.9 2.4" fill="none" stroke="#fff" stroke-width="1.3"/></svg>
<svg class="r" style="left:614.50px;top:463.30px" width="9" height="9" viewBox="0 0 9 9"><rect x="0.5" y="0.5" width="8" height="8" rx="1.5" fill="#fff" stroke="#8c8c8c" stroke-width="1"/></svg>
<svg class="r" style="left:644.00px;top:463.30px" width="9" height="9" viewBox="0 0 9 9"><rect x="0.5" y="0.5" width="8" height="8" rx="1.5" fill="#fff" stroke="#8c8c8c" stroke-width="1"/></svg>
<svg class="r" style="left:0;top:0" width="720" height="495" viewBox="0 0 720 495"><ellipse cx="644.7" cy="323.5" rx="25.5" ry="57.8" fill="none" stroke="#e4161e" stroke-width="4.8"/><path d="M60 332.7 L88.4 357.3 L74.7 357.3 L74.7 382 L45.5 382 L45.5 357.3 L31.7 357.3 Z" fill="#fff" stroke="#e4161e" stroke-width="5" stroke-linejoin="round"/><path d="M427.9 328.4 L454.2 355.5 L441 355.5 L441 383.2 L415 383.2 L415 355.5 L401.9 355.5 Z" fill="#fff" stroke="#e4161e" stroke-width="5" stroke-linejoin="round"/></svg>
</body></html>
